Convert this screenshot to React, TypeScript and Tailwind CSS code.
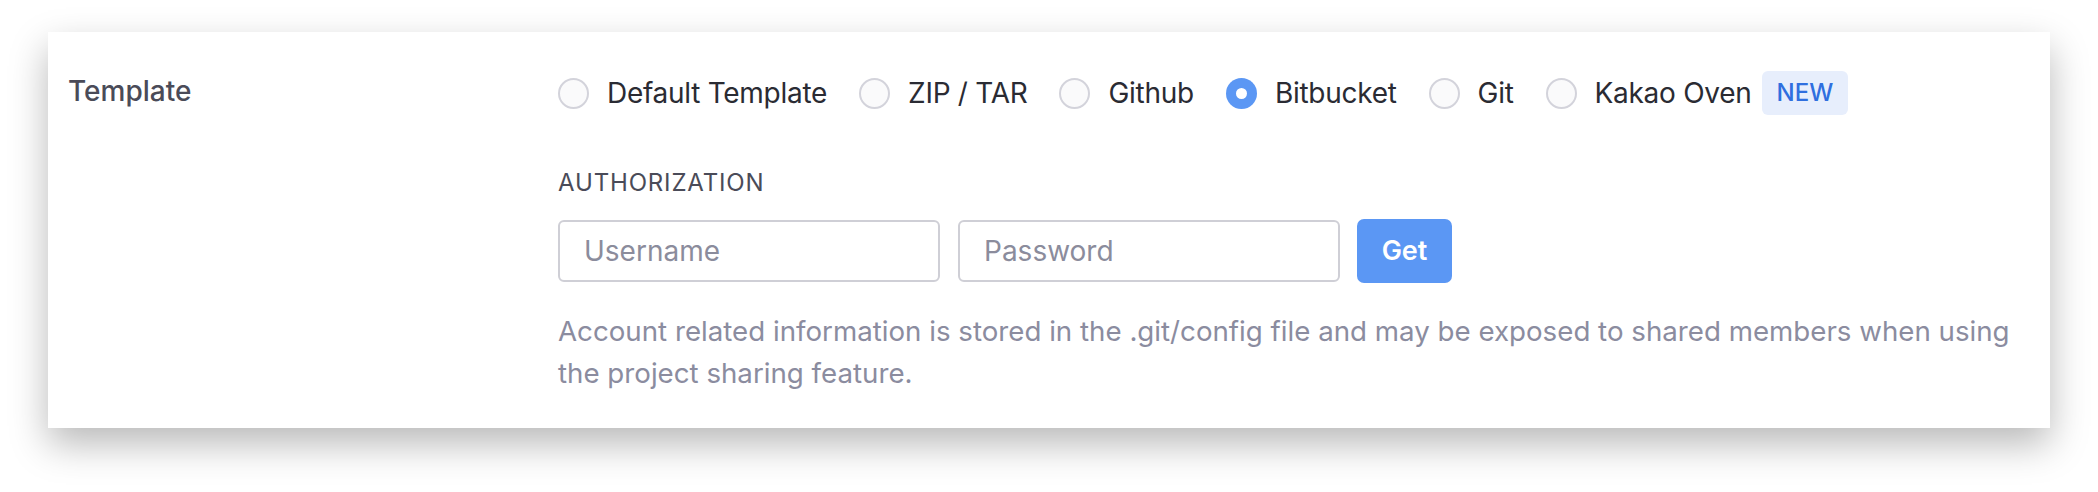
const options = [
  { label: 'Default Template', checked: false },
  { label: 'ZIP / TAR', checked: false },
  { label: 'Github', checked: false },
  { label: 'Bitbucket', checked: true },
  { label: 'Git', checked: false },
  { label: 'Kakao Oven', checked: false, badge: 'NEW' },
];

function Radio({ checked }: { checked: boolean }) {
  return checked ? (
    <span className="size-[31px] rounded-full bg-[#5b97f4] flex items-center justify-center shrink-0">
      <span className="size-[11px] rounded-full bg-white" />
    </span>
  ) : (
    <span className="size-[31px] rounded-full border-2 border-[#d3d3db] bg-[#fafafb] shrink-0" />
  );
}

export default function App() {
  return (
    <div className="bg-white min-h-[492px] pt-[32px] pl-[48px] font-['Inter','Liberation_Sans',sans-serif]">
      <div className="w-[2002px] h-[396px] bg-white shadow-[0_16px_36px_rgba(0,0,0,0.28)] flex pl-[20px]">
        {/* Label column */}
        <div className="w-[490px] pt-[41px] text-[28px] leading-[36px] font-medium text-[#4a4b58]">
          Template
        </div>

        {/* Content column */}
        <div className="flex-1 pt-[39px] pr-[20px]">
          <div className="flex items-center gap-[32px] h-[44px]">
            {options.map((o) => (
              <label key={o.label} className="flex items-center gap-[18px]">
                <Radio checked={o.checked} />
                <span className="text-[28px] text-[#2a2b33] tracking-[-0.01em]">{o.label}</span>
                {o.badge && (
                  <span className="-ml-[8px] h-[44px] px-[15px] flex items-center rounded-[6px] bg-[#e7eefc] text-[#2f6fdf] text-[24px] font-medium">
                    {o.badge}
                  </span>
                )}
              </label>
            ))}
          </div>

          <p className="mt-[53px] text-[24px] leading-[30px] tracking-[0.035em] text-[#4a4b58]">
            AUTHORIZATION
          </p>

          <div className="mt-[21px] flex items-center gap-[18px]">
            <input
              placeholder="Username"
              className="w-[382px] h-[62px] rounded-[6px] border-2 border-[#cfcfd6] px-[24px] text-[28px] text-[#2a2b33] placeholder:text-[#8b8c9c] outline-none"
            />
            <input
              type="password"
              placeholder="Password"
              className="w-[382px] h-[62px] rounded-[6px] border-2 border-[#cfcfd6] px-[24px] text-[28px] text-[#2a2b33] placeholder:text-[#8b8c9c] outline-none"
            />
            <button className="w-[95px] h-[64px] -ml-[1px] rounded-[7px] bg-[#5b97f4] text-white text-[27px] font-semibold">
              Get
            </button>
          </div>

          <p className="mt-[27px] text-[27.7px] leading-[42px] text-[#8b8c9f] max-w-[1470px]">
            Account related information is stored in the .git/config file and may be exposed to shared members when using
            the project sharing feature.
          </p>
        </div>
      </div>
    </div>
  );
}
